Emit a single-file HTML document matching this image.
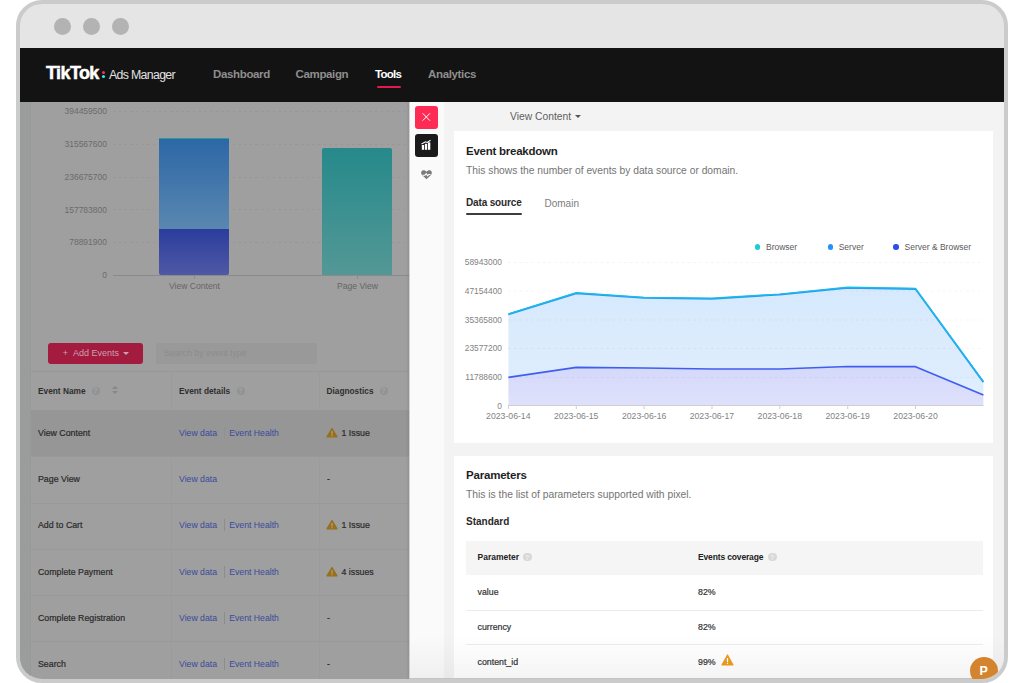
<!DOCTYPE html>
<html><head><meta charset="utf-8">
<style>
html,body{margin:0;padding:0;}
body{width:1024px;height:683px;overflow:hidden;background:#fff;position:relative;font-family:"Liberation Sans",sans-serif;}
.a{position:absolute;}
.t{position:absolute;white-space:nowrap;line-height:1;}
#frame{left:16px;top:0;width:992px;height:683px;box-sizing:border-box;border:4px solid #cbcbcb;border-radius:26px;background:#e5e5e5;}
#clip{left:0;top:0;width:1024px;height:683px;clip-path:inset(4px 20px 4px 20px round 22px);}
.dot{width:17px;height:17px;border-radius:50%;background:#b3b3b3;top:17.5px;}
#nav{left:20px;top:48px;width:984px;height:54.3px;background:#131313;}
.nav{font-weight:bold;font-size:11.5px;color:#8e8e8e;letter-spacing:-0.35px;}
#left{left:20px;top:102px;width:389px;height:581px;background:#9f9f9f;overflow:hidden;}
#drawer{left:409.5px;top:102px;width:595px;height:581px;background:#f3f3f3;}
.card{background:#fff;}
.grid{left:113px;width:296px;height:1px;background:repeating-linear-gradient(90deg,#979797 0 2.5px,transparent 2.5px 5.7px);}
.yl{right:917px;font-size:8.5px;color:#6b6b6b;text-align:right;}
.xl{font-size:8.6px;color:#666;}
.hl{left:31px;width:378px;height:1px;background:#999999;}
.vl{top:371px;width:1px;height:312px;background:#9b9b9b;}
.th{font-size:8.3px;font-weight:bold;color:#2e2e2e;}
.td{font-size:8.8px;color:#2a2a2a;-webkit-text-stroke:0.2px #2a2a2a;}
.lk{font-size:8.7px;color:#3a4a9c;}
.help{width:8px;height:8px;border-radius:50%;background:#939393;color:#a6a6a6;font-size:6.5px;line-height:8.5px;text-align:center;font-weight:bold;}
.ld{top:244.4px;width:5.5px;height:5.5px;border-radius:50%;}
.lg{top:243.3px;font-size:8.5px;color:#5a5a5a;}
.dyl{right:522px;font-size:8.4px;color:#838383;text-align:right;}
.dxl{font-size:8.7px;color:#838383;}
.pth{font-size:8.5px;font-weight:bold;color:#222;}
.ptd{font-size:8.8px;color:#333;-webkit-text-stroke:0.2px #333;}
.phelp{width:8.5px;height:8.5px;border-radius:50%;background:#d8d8d8;color:#eeeeee;font-size:7px;line-height:9px;text-align:center;font-weight:bold;}
</style></head><body>
<div id="frame" class="a"></div>
<div id="clip" class="a">
  <div class="a dot" style="left:54px"></div>
  <div class="a dot" style="left:83px"></div>
  <div class="a dot" style="left:112px"></div>
  <div id="nav" class="a"></div>
  <div class="t" style="left:46px;top:63.5px;font-size:18px;font-weight:bold;color:#fff;letter-spacing:-0.6px;-webkit-text-stroke:0.5px #fff">TikTok</div>
  <div class="a" style="left:102px;top:70.5px;width:3px;height:3px;background:#fe2c55;border-radius:50%"></div>
  <div class="a" style="left:102px;top:74.5px;width:3px;height:3px;background:#25f4ee;border-radius:50%"></div>
  <div class="t" style="left:109px;top:68.5px;font-size:12.3px;color:#e2e2e2;letter-spacing:-0.65px">Ads Manager</div>
  <div class="t nav" style="left:213px;top:69px">Dashboard</div>
  <div class="t nav" style="left:295.5px;top:69px">Campaign</div>
  <div class="t nav" style="left:375px;top:69px;color:#fff;letter-spacing:-0.75px">Tools</div>
  <div class="a" style="left:376.5px;top:85.5px;width:24px;height:2.5px;background:#e5194f;border-radius:1px"></div>
  <div class="t nav" style="left:428px;top:69px">Analytics</div>


  <div id="left" class="a"></div>
  <div class="a" style="left:20px;top:102px;width:10px;height:581px;background:#9b9c9c"></div>
  <div class="a" style="left:30px;top:102px;width:1px;height:581px;background:#979999"></div>
  <!-- chart gridlines -->
  <div class="a grid" style="top:111px"></div>
  <div class="a grid" style="top:144px"></div>
  <div class="a grid" style="top:176.5px"></div>
  <div class="a grid" style="top:209px"></div>
  <div class="a grid" style="top:242px"></div>
  <div class="a" style="left:113px;top:275px;width:296px;height:1px;background:#8a8a8a"></div>
  <div class="a" style="left:193.5px;top:275px;width:1px;height:4px;background:#8a8a8a"></div>
  <div class="a" style="left:356.5px;top:275px;width:1px;height:4px;background:#8a8a8a"></div>
  <div class="t yl" style="top:107px">394459500</div>
  <div class="t yl" style="top:140px">315567600</div>
  <div class="t yl" style="top:172.5px">236675700</div>
  <div class="t yl" style="top:205.5px">157783800</div>
  <div class="t yl" style="top:238px">78891900</div>
  <div class="t yl" style="top:271px">0</div>
  <!-- bars -->
  <div class="a" style="left:159px;top:138px;width:70px;height:91px;background:linear-gradient(#2c67a6,#5a87b0);border-top:1.5px solid #2e9a9a;box-sizing:border-box"></div>
  <div class="a" style="left:159px;top:229px;width:70px;height:46px;background:linear-gradient(#2a3c9d,#4f59a4);border-radius:0 0 2px 2px"></div>
  <div class="a" style="left:321.5px;top:147.5px;width:70px;height:127.5px;background:linear-gradient(#26898b,#539896);border-radius:2px 2px 0 0"></div>
  <div class="t xl" style="left:169px;top:281.5px">View Content</div>
  <div class="t xl" style="left:337px;top:281.5px">Page View</div>
  <!-- add events -->
  <div class="a" style="left:48px;top:343px;width:95px;height:21px;background:#a41b40;border-radius:3px"></div>
  <div class="t" style="left:62.7px;top:349px;font-size:9px;color:#c9a2ad">+&nbsp;&nbsp;Add Events</div>
  <div class="a" style="left:123px;top:352px;width:0;height:0;border-left:3px solid transparent;border-right:3px solid transparent;border-top:3px solid #c9a2ad"></div>
  <div class="a" style="left:155.5px;top:343px;width:161px;height:21px;background:#999999;border-radius:2px"></div>
  <div class="t" style="left:164px;top:349px;font-size:8.8px;color:#8c8c8c">Search by event type</div>
  <!-- table -->
  <div class="a" style="left:31px;top:371px;width:378px;height:1px;background:#979797"></div>
  <div class="a hl" style="top:456px"></div>
  <div class="a hl" style="top:502.5px"></div>
  <div class="a hl" style="top:548.5px"></div>
  <div class="a hl" style="top:594.5px"></div>
  <div class="a hl" style="top:640.5px"></div>
  <div class="a vl" style="left:171px"></div>
  <div class="a vl" style="left:319px"></div>
  <div class="a" style="left:31px;top:410px;width:378px;height:46px;background:#969696"></div>
  <div class="t th" style="left:38px;top:386.7px">Event Name</div>
  <div class="a help" style="left:91.5px;top:386.5px">?</div>
  <div class="a" style="left:112px;top:386.3px;width:0;height:0;border-left:3px solid transparent;border-right:3px solid transparent;border-bottom:3px solid #868686"></div>
  <div class="a" style="left:112px;top:390.5px;width:0;height:0;border-left:3px solid transparent;border-right:3px solid transparent;border-top:3px solid #868686"></div>
  <div class="t th" style="left:179px;top:386.7px">Event details</div>
  <div class="a help" style="left:236.5px;top:386.5px">?</div>
  <div class="t th" style="left:326.5px;top:386.7px">Diagnostics</div>
  <div class="a help" style="left:379.5px;top:386.5px">?</div>
  <div class="t td" style="left:38px;top:429.2px">View Content</div>
  <div class="t lk" style="left:179px;top:429.2px">View data</div>
  <div class="a" style="left:224px;top:427.0px;width:1px;height:12px;background:#929292"></div>
  <div class="t lk" style="left:229.2px;top:429.2px">Event Health</div>
  <svg class="a" style="left:326px;top:427.0px" width="12" height="11" viewBox="0 0 12 11"><path d="M6 1.6 L11 9.9 L1 9.9 Z" fill="#96701f" stroke="#96701f" stroke-width="1.3" stroke-linejoin="round"/><rect x="5.45" y="4" width="1.1" height="3.6" fill="#b9a77e"/><rect x="5.45" y="8.2" width="1.1" height="1.1" fill="#b9a77e"/></svg>
  <div class="t td" style="left:341.5px;top:429.2px">1 Issue</div>
  <div class="t td" style="left:38px;top:475.2px">Page View</div>
  <div class="t lk" style="left:179px;top:475.2px">View data</div>
  <div class="t td" style="left:327px;top:475.2px">-</div>
  <div class="t td" style="left:38px;top:521.2px">Add to Cart</div>
  <div class="t lk" style="left:179px;top:521.2px">View data</div>
  <div class="a" style="left:224px;top:519.0px;width:1px;height:12px;background:#8c8c8c"></div>
  <div class="t lk" style="left:229.2px;top:521.2px">Event Health</div>
  <svg class="a" style="left:326px;top:519.0px" width="12" height="11" viewBox="0 0 12 11"><path d="M6 1.6 L11 9.9 L1 9.9 Z" fill="#96701f" stroke="#96701f" stroke-width="1.3" stroke-linejoin="round"/><rect x="5.45" y="4" width="1.1" height="3.6" fill="#b9a77e"/><rect x="5.45" y="8.2" width="1.1" height="1.1" fill="#b9a77e"/></svg>
  <div class="t td" style="left:341.5px;top:521.2px">1 Issue</div>
  <div class="t td" style="left:38px;top:567.7px">Complete Payment</div>
  <div class="t lk" style="left:179px;top:567.7px">View data</div>
  <div class="a" style="left:224px;top:565.5px;width:1px;height:12px;background:#8c8c8c"></div>
  <div class="t lk" style="left:229.2px;top:567.7px">Event Health</div>
  <svg class="a" style="left:326px;top:565.5px" width="12" height="11" viewBox="0 0 12 11"><path d="M6 1.6 L11 9.9 L1 9.9 Z" fill="#96701f" stroke="#96701f" stroke-width="1.3" stroke-linejoin="round"/><rect x="5.45" y="4" width="1.1" height="3.6" fill="#b9a77e"/><rect x="5.45" y="8.2" width="1.1" height="1.1" fill="#b9a77e"/></svg>
  <div class="t td" style="left:341.5px;top:567.7px">4 issues</div>
  <div class="t td" style="left:38px;top:613.7px">Complete Registration</div>
  <div class="t lk" style="left:179px;top:613.7px">View data</div>
  <div class="a" style="left:224px;top:611.5px;width:1px;height:12px;background:#8c8c8c"></div>
  <div class="t lk" style="left:229.2px;top:613.7px">Event Health</div>
  <div class="t td" style="left:327px;top:613.7px">-</div>
  <div class="t td" style="left:38px;top:659.7px">Search</div>
  <div class="t lk" style="left:179px;top:659.7px">View data</div>
  <div class="a" style="left:224px;top:657.5px;width:1px;height:12px;background:#8c8c8c"></div>
  <div class="t lk" style="left:229.2px;top:659.7px">Event Health</div>
  <div class="t td" style="left:327px;top:659.7px">-</div>
  <div class="a" style="left:405.5px;top:102px;width:4px;height:577px;background:linear-gradient(90deg,rgba(0,0,0,0),rgba(0,0,0,0.1))"></div>
  <div id="drawer" class="a"></div>
  <div class="a" style="left:409.5px;top:102px;width:34px;height:581px;background:#fafafa"></div>
  <div class="a" style="left:415px;top:106px;width:22.5px;height:22.5px;background:#fe2c55;border-radius:3px"></div>
  <svg class="a" style="left:415px;top:106px" width="23" height="23" viewBox="0 0 23 23"><path d="M7.9 7.6 L14.7 14.4 M14.7 7.6 L7.9 14.4" stroke="#fff" stroke-width="1" stroke-linecap="round"/></svg>
  <div class="a" style="left:415px;top:134px;width:22.5px;height:22.5px;background:#1a1a1a;border-radius:3px"></div>
  <svg class="a" style="left:415px;top:134px" width="23" height="23" viewBox="0 0 23 23"><rect x="6.8" y="11" width="2.3" height="4.8" fill="#fff"/><rect x="9.9" y="9.8" width="2.3" height="6" fill="#fff"/><rect x="13" y="8.4" width="2.3" height="7.4" fill="#fff"/><path d="M6.5 10 L10.5 7.8 L12.3 8.4 L15.5 6.3" stroke="#fff" stroke-width="1.1" fill="none"/></svg>
  <svg class="a" style="left:420px;top:169px" width="13" height="11" viewBox="0 0 13 11"><path d="M6.5 10.3 L2 6 C0.6 4.6 0.9 2 2.9 1.3 C4.3 0.9 5.6 1.6 6.5 2.7 C7.4 1.6 8.7 0.9 10.1 1.3 C12.1 2 12.4 4.6 11 6 Z" fill="#7b7b7b"/><path d="M2.5 6.3 L4.8 6.3 L6.2 4.6 L7.6 6.8 L8.8 5.5 L10.5 5.5" stroke="#fff" stroke-width="1.1" fill="none" stroke-linejoin="round"/></svg>
  <div class="t" style="left:510px;top:111.5px;font-size:10.3px;color:#5e5e5e">View Content</div>
  <div class="a" style="left:575px;top:115px;width:0;height:0;border-left:3.2px solid transparent;border-right:3.2px solid transparent;border-top:3.5px solid #555"></div>
  <div class="a card" style="left:454px;top:131px;width:539px;height:312px"></div>
  <div class="a card" style="left:454px;top:456px;width:539px;height:240px"></div>
  <div class="t" style="left:466px;top:145.7px;font-size:11.5px;font-weight:bold;color:#1f1f1f;letter-spacing:-0.25px">Event breakdown</div>
  <div class="t" style="left:466px;top:165.5px;font-size:10.28px;color:#747474">This shows the number of events by data source or domain.</div>
  <div class="t" style="left:466px;top:198.2px;font-size:10px;font-weight:bold;color:#2a2a2a;letter-spacing:-0.15px">Data source</div>
  <div class="a" style="left:466px;top:213px;width:55.5px;height:2.2px;background:#3d3d3d;border-radius:1px"></div>
  <div class="t" style="left:544.5px;top:198.5px;font-size:10px;color:#7e7e7e">Domain</div>
  <div class="a ld" style="left:754.6px;background:#1cccd8"></div>
  <div class="t lg" style="left:766px">Browser</div>
  <div class="a ld" style="left:827.5px;background:#2094f7"></div>
  <div class="t lg" style="left:838.7px">Server</div>
  <div class="a ld" style="left:893px;background:#2d4ded"></div>
  <div class="t lg" style="left:904.5px">Server &amp; Browser</div>
  <div class="t dyl" style="top:258.0px">58943000</div>
  <div class="t dyl" style="top:286.5px">47154400</div>
  <div class="t dyl" style="top:315.7px">35365800</div>
  <div class="t dyl" style="top:344.3px">23577200</div>
  <div class="t dyl" style="top:373.1px">11788600</div>
  <div class="t dyl" style="top:401.5px">0</div>
  <div class="t dxl" style="left:486.1px;top:411.5px">2023-06-14</div>
  <div class="t dxl" style="left:554.0px;top:411.5px">2023-06-15</div>
  <div class="t dxl" style="left:621.9px;top:411.5px">2023-06-16</div>
  <div class="t dxl" style="left:689.7px;top:411.5px">2023-06-17</div>
  <div class="t dxl" style="left:757.6px;top:411.5px">2023-06-18</div>
  <div class="t dxl" style="left:825.4px;top:411.5px">2023-06-19</div>
  <div class="t dxl" style="left:893.3px;top:411.5px">2023-06-20</div>
  <svg class="a" style="left:0;top:0" width="1024" height="683" viewBox="0 0 1024 683">
    <defs>
      <linearGradient id="gu" x1="0" y1="0" x2="0" y2="1"><stop offset="0" stop-color="#d6e9fd"/><stop offset="1" stop-color="#e0eefd"/></linearGradient>
      <linearGradient id="gl" x1="0" y1="0" x2="0" y2="1"><stop offset="0" stop-color="#d4d8fa"/><stop offset="1" stop-color="#dfe1fb"/></linearGradient>
    </defs>
    <polygon points="508.4,313.8 576.3,292.7 644.1,297.3 712.0,298.2 779.8,294.0 847.7,287.2 915.5,288.4 983.4,381.5 983.4,395.0 915.5,366.7 847.7,366.5 779.8,369.0 712.0,369.0 644.1,368.0 576.3,367.3 508.4,377.3" fill="url(#gu)"/>
    <polygon points="508.4,377.3 576.3,367.3 644.1,368.0 712.0,369.0 779.8,369.0 847.7,366.5 915.5,366.7 983.4,395.0 983.4,405.5 508.4,405.5" fill="url(#gl)"/>
    <line x1="508" y1="262.5" x2="983.5" y2="262.5" stroke="rgba(0,0,0,0.045)" stroke-width="1" stroke-dasharray="2.5,3.3"/>
    <line x1="508" y1="291.0" x2="983.5" y2="291.0" stroke="rgba(0,0,0,0.045)" stroke-width="1" stroke-dasharray="2.5,3.3"/>
    <line x1="508" y1="320.0" x2="983.5" y2="320.0" stroke="rgba(0,0,0,0.045)" stroke-width="1" stroke-dasharray="2.5,3.3"/>
    <line x1="508" y1="348.5" x2="983.5" y2="348.5" stroke="rgba(0,0,0,0.045)" stroke-width="1" stroke-dasharray="2.5,3.3"/>
    <line x1="508" y1="377.5" x2="983.5" y2="377.5" stroke="rgba(0,0,0,0.045)" stroke-width="1" stroke-dasharray="2.5,3.3"/>
    <line x1="508" y1="405.5" x2="983.5" y2="405.5" stroke="#cfcfcf" stroke-width="1"/>
    <line x1="508.4" y1="405.5" x2="508.4" y2="409" stroke="#cfcfcf" stroke-width="1"/>
    <line x1="576.3" y1="405.5" x2="576.3" y2="409" stroke="#cfcfcf" stroke-width="1"/>
    <line x1="644.1" y1="405.5" x2="644.1" y2="409" stroke="#cfcfcf" stroke-width="1"/>
    <line x1="712.0" y1="405.5" x2="712.0" y2="409" stroke="#cfcfcf" stroke-width="1"/>
    <line x1="779.8" y1="405.5" x2="779.8" y2="409" stroke="#cfcfcf" stroke-width="1"/>
    <line x1="847.7" y1="405.5" x2="847.7" y2="409" stroke="#cfcfcf" stroke-width="1"/>
    <line x1="915.5" y1="405.5" x2="915.5" y2="409" stroke="#cfcfcf" stroke-width="1"/>
    <polyline points="508.4,314.4 576.3,293.3 644.1,297.9 712.0,298.8 779.8,294.6 847.7,287.8 915.5,289.0 983.4,382.1" fill="none" stroke="#2a9cf3" stroke-width="1.8" stroke-linejoin="round"/>
    <polyline points="508.4,313.8 576.3,292.7 644.1,297.3 712.0,298.2 779.8,294.0 847.7,287.2 915.5,288.4 983.4,381.5" fill="none" stroke="#17bde6" stroke-width="1.25" stroke-linejoin="round"/>
    <polyline points="508.4,377.3 576.3,367.3 644.1,368.0 712.0,369.0 779.8,369.0 847.7,366.5 915.5,366.7 983.4,395.0" fill="none" stroke="#3f5ef0" stroke-width="1.7" stroke-linejoin="round"/>
  </svg>
  <div class="t" style="left:466px;top:470px;font-size:11.5px;font-weight:bold;color:#1f1f1f;letter-spacing:-0.2px">Parameters</div>
  <div class="t" style="left:466px;top:489.5px;font-size:10.3px;color:#747474">This is the list of parameters supported with pixel.</div>
  <div class="t" style="left:466px;top:517px;font-size:10px;font-weight:bold;color:#2a2a2a">Standard</div>
  <div class="a" style="left:466px;top:541px;width:516.5px;height:34px;background:#f5f5f5"></div>
  <div class="a" style="left:466px;top:609.5px;width:516.5px;height:1px;background:#ececec"></div>
  <div class="a" style="left:466px;top:644px;width:516.5px;height:1px;background:#ececec"></div>
  <div class="t pth" style="left:477.5px;top:552.7px">Parameter</div>
  <div class="a phelp" style="left:523px;top:552.8px">?</div>
  <div class="t pth" style="left:698px;top:552.7px;letter-spacing:-0.15px">Events coverage</div>
  <div class="a phelp" style="left:768px;top:552.8px">?</div>
  <div class="t ptd" style="left:477.5px;top:588px">value</div>
  <div class="t ptd" style="left:698px;top:588px">82%</div>
  <div class="t ptd" style="left:477.5px;top:623px">currency</div>
  <div class="t ptd" style="left:698px;top:623px">82%</div>
  <div class="t ptd" style="left:477.5px;top:658px">content_id</div>
  <div class="t ptd" style="left:698px;top:658px">99%</div>
  <svg class="a" style="left:721px;top:654px" width="13" height="12" viewBox="0 0 13 12"><path d="M6.5 1 L12 11 L1 11 Z" fill="#f09a20" stroke="#f09a20" stroke-width="1.2" stroke-linejoin="round"/><rect x="5.9" y="4" width="1.2" height="4" fill="#fff"/><rect x="5.9" y="8.8" width="1.2" height="1.2" fill="#fff"/></svg>
  <div class="a" style="left:409.5px;top:636px;width:595px;height:43px;background:linear-gradient(rgba(0,0,0,0),rgba(0,0,0,0.045))"></div>
  <div class="a" style="left:409px;top:678px;width:595px;height:1px;background:#c4c4c4"></div>
  <div class="a" style="left:969.7px;top:656.5px;width:28px;height:28px;border-radius:50%;background:#d4832f"></div>
  <div class="t" style="left:979.5px;top:664.5px;font-size:12.5px;font-weight:bold;color:#fff">P</div>
</div>
</body></html>
